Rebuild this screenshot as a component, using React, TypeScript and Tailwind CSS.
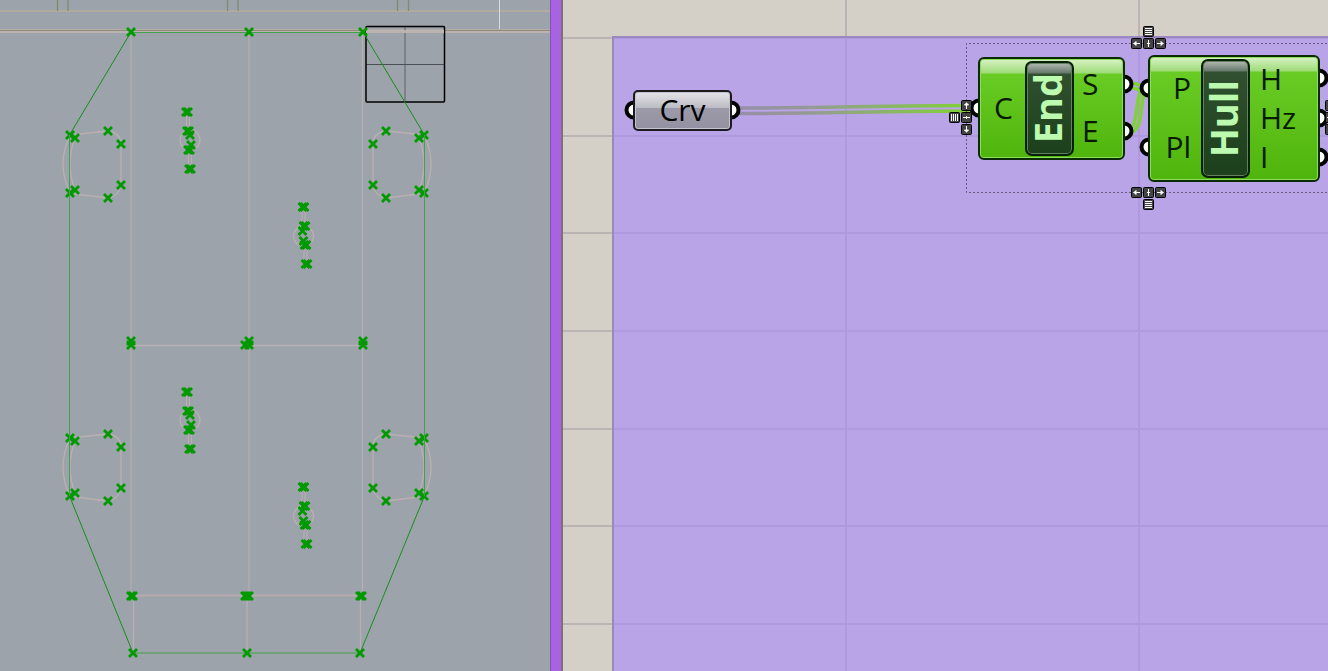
import React from "react";

type Point = [number, number];

const CROSS = "M-4 -4L4 4M-4 4L4 -4";

const framePoints: Point[] = [
  [131, 32], [249, 32], [363, 32],
  [131, 341], [131, 345], [245, 345], [249, 341], [249, 345], [363, 341], [363, 345],
  [131, 596], [133, 596], [245, 596], [247, 596], [249, 596], [360, 596], [362, 596],
  [133, 653], [247, 653], [360, 653],
];

const wheelPoints: Point[] = [
  [70, 135], [75, 138], [108, 131], [121, 144], [121, 185], [108, 198], [75, 190], [70, 193],
];

const lugPoints: Point[] = [
  [186, 112], [188, 112], [187, 131], [189, 131], [190, 135], [191, 145], [188, 150], [190, 150], [189, 169], [191, 169],
];

function Cross({ at }: { at: Point }) {
  return <path d={CROSS} transform={`translate(${at[0]} ${at[1]})`} stroke="#009a00" strokeWidth="2.800" />;
}

function Wheel({ transform }: { transform: string }) {
  return (
    <g transform={transform}>
      <path d="M70 135Q56 164 70 193M75 138Q65 164 75 190M75 134.500L108 131Q121 133 121 144V185Q119 196 108 198L75 194" stroke="#bdafb1" strokeWidth="1.300" />
      {wheelPoints.map((p, i) => <Cross key={i} at={p} />)}
    </g>
  );
}

function Lug({ transform }: { transform: string }) {
  return (
    <g transform={transform}>
      <circle cx="190" cy="140" r="10" stroke="#bdafb1" strokeWidth="1.300" />
      <path d="M186.500 112V131M189.500 112V131M188.500 150V169M191.500 150V169" stroke="#bdafb1" />
      {lugPoints.map((p, i) => <Cross key={i} at={p} />)}
    </g>
  );
}

function Viewport() {
  return (
    <svg className="block" width="550" height="671" fill="none" role="img" aria-label="Curve outlines">
      <path d="M0 11H550" stroke="#b1ab9f" strokeWidth="2" />
      <path d="M57.500 0V11M68 0V11M227.500 0V11M238 0V11M397.500 0V11M408.500 0V11" stroke="#7f8a6e" strokeWidth="1.300" />
      <path d="M499.500 0V30" stroke="#d8dbdd" />
      <path d="M0 29.500H550" stroke="#b5aca8" />
      <path d="M0 30.500H550" stroke="#8f8b76" />
      <path d="M0 32H550" stroke="#bab3b1" strokeWidth="2" />
      <path d="M405 27V102" stroke="#7c8288" strokeWidth="2" />
      <path d="M366 64.500H444" stroke="#4c5055" />
      <rect x="366" y="26.500" width="78.500" height="75.500" rx="1" stroke="#000" strokeWidth="1.500" />
      <path d="M366 31.500H444" stroke="#bab3b1" strokeWidth="3" />
      <path d="M131 32V596M249 32V596" stroke="#aba9ad" strokeWidth="2" />
      <path d="M362.500 32V596M131 345.500H363M133.500 596V653M247 596V653M360.500 596V653" stroke="#b9aeb1" strokeWidth="1.300" />
      <path d="M131 595.500H362" stroke="#b5abae" strokeWidth="2" />
      <Wheel transform="translate(0 0)" />
      <Wheel transform="translate(0 303)" />
      <Wheel transform="translate(494 0) scale(-1 1)" />
      <Wheel transform="translate(494 303) scale(-1 1)" />
      <Lug transform="translate(0 0)" />
      <Lug transform="translate(0 280)" />
      <Lug transform="translate(493.500 376) rotate(180)" />
      <Lug transform="translate(493.500 656) rotate(180)" />
      <path d="M131 32.500H363M69.500 135V496M424.500 135V496M133 653H360" stroke="#45a04c" />
      <path d="M131 32L69.500 135M363 32L424.500 135M69.500 496L133 653M424.500 496L360 653" stroke="#149018" />
      {framePoints.map((p, i) => <Cross key={i} at={p} />)}
    </svg>
  );
}

function Port({ side }: { side: "in" | "out" }) {
  return (
    <svg className="h-5 w-[10px]" viewBox="0 0 10 20" aria-hidden="true">
      <circle cx={side === "in" ? 10 : 0} cy="10" r="7.500" fill="#fff" stroke="#000" strokeWidth="4" />
    </svg>
  );
}

function Ports({ side, count }: { side: "in" | "out"; count: number }) {
  return (
    <div className={side === "in" ? "-mr-px flex flex-col pt-[3px] pb-[5px]" : "-ml-px flex flex-col pt-[3px] pb-[5px]"}>
      {Array.from({ length: count }, (_, i) => (
        <div key={i} className="flex flex-1 items-center"><Port side={side} /></div>
      ))}
    </div>
  );
}

interface ComponentProps {
  name: string;
  inputs: string[];
  outputs: string[];
  className: string;
  inputClass: string;
  outputClass: string;
}

function Component({ name, inputs, outputs, className, inputClass, outputClass }: ComponentProps) {
  return (
    <div className={`absolute flex ${className}`}>
      <Ports side="in" count={inputs.length} />
      <section className="relative z-10 flex flex-1 rounded-[6px] border-2 border-[#0a2a04] bg-[linear-gradient(#d9f3c6_0px,#9edb78_14px,#69cc25_15px,#4fb40c_100%)] py-0.5 shadow-[inset_0_0_0_1px_#8fdc5c]">
        <ul className={`flex flex-col pb-0.5 ${inputClass}`}>
          {inputs.map((t) => <li key={t} className="flex flex-1 items-center leading-8">{t}</li>)}
        </ul>
        <h2 className="flex w-[49px] items-center justify-center rounded-[7px] border-2 border-[#062006] bg-[linear-gradient(#b4bcb4_0px,#66786a_10px,#30502f_11px,#1c401b_100%)] pr-1.5 text-[38px] leading-[38px] font-bold text-[#bcfab0] shadow-[inset_0_0_0_1px_#64805f]">
          <span className="rotate-180 [writing-mode:vertical-rl]">{name}</span>
        </h2>
        <ul className={`flex flex-1 flex-col pb-0.5 ${outputClass}`}>
          {outputs.map((t) => <li key={t} className="flex flex-1 items-center leading-8">{t}</li>)}
        </ul>
      </section>
      <Ports side="out" count={outputs.length} />
    </div>
  );
}

const glyphs = {
  left: "M2.500 5.500H9M5 3.500L3 5.500L5 7.500Z",
  right: "M2 5.500H8.500M6 3.500L8 5.500L6 7.500Z",
  up: "M5.500 2.500V9M3.500 5L5.500 3L7.500 5Z",
  down: "M5.500 2V8.500M3.500 6L5.500 8L7.500 6Z",
  plusV: "M5.500 2V9M4 5.500H7",
  plusH: "M2 5.500H9M5.500 4V7",
  rows: "M2 2.500H9M2 4.500H9M2 6.500H9M2 8.500H9",
  columns: "M2.500 2V9M4.500 2V9M6.500 2V9M8.500 2V9",
};

function Handle({ glyph, label }: { glyph: keyof typeof glyphs; label: string }) {
  return (
    <button type="button" aria-label={label} className="block size-[11px]">
      <svg viewBox="0 0 11 11" className="block size-[11px]">
        <rect x="0.500" y="0.500" width="10" height="10" rx="1" fill="#444" stroke="#000" />
        <path d={glyphs[glyph]} stroke="#fff" fill="#fff" />
      </svg>
    </button>
  );
}

function HorizontalHandles() {
  return (
    <div className="flex gap-px">
      <Handle glyph="left" label="Align left" />
      <Handle glyph="plusV" label="Align centre" />
      <Handle glyph="right" label="Align right" />
    </div>
  );
}

function VerticalHandles() {
  return (
    <div className="flex flex-col gap-px">
      <Handle glyph="up" label="Align top" />
      <Handle glyph="plusH" label="Align middle" />
      <Handle glyph="down" label="Align bottom" />
    </div>
  );
}

function Wires() {
  return (
    <svg className="absolute inset-0 size-full" fill="none" aria-hidden="true">
      <defs>
        <linearGradient id="wire" gradientUnits="userSpaceOnUse" x1="175" y1="0" x2="410" y2="0">
          <stop offset="0" stopColor="#978ea8" />
          <stop offset="0.300" stopColor="#959a94" />
          <stop offset="1" stopColor="#7fd332" />
        </linearGradient>
      </defs>
      <path d="M172 108C260 108 320 105.500 410 105.500M172 113.500C260 113.500 320 111 410 111" stroke="url(#wire)" strokeWidth="3.500" />
      <path d="M568 83C574 83 576 86 582 86M568 88C574 88 576 91 582 91M566 129C577 126 570 91 583 86M566 134C584 128 574 96 585 90" stroke="#7fd332" strokeWidth="3.500" />
      <path d="M1000 43.500H403.500V192.500H1000" stroke="#66577f" strokeDasharray="2 2" />
    </svg>
  );
}

function Grid() {
  return (
    <svg className="absolute inset-0 size-full" aria-hidden="true">
      <path
        d="M283 0V2000M576 0V2000M0 38H3000M0 136H3000M0 233H3000M0 331H3000M0 429H3000M0 526H3000M0 624H3000"
        stroke="#201030" strokeOpacity="0.140" strokeWidth="2"
      />
    </svg>
  );
}

export default function App() {
  return (
    <main className="flex h-screen overflow-hidden bg-[#9ca3ab] font-['Open_Sans',sans-serif] text-[30px] text-[#061a02]">
      <div className="shrink-0"><Viewport /></div>
      <div className="w-[13px] shrink-0 border-r-2 border-l border-r-[#77727c] border-l-[#8750b8] bg-[#a863e0]" />
      <div className="relative flex-1 overflow-hidden bg-[#d4d0c8] pt-9 pl-[49px]">
        <Grid />
        <div className="relative h-full border-t-2 border-l-2 border-[#9a88be] bg-[rgba(169,135,253,0.6)]" />
        <Wires />
        <div className="absolute top-[90px] left-[61px] flex h-[41px] w-[117px] text-black">
          <Ports side="in" count={1} />
          <div className="z-10 flex flex-1 items-center justify-center rounded-[5px] border-2 border-[#1c1c20] bg-[linear-gradient(#e4e4e8,#bcbcc4_42%,#9c9aa8_43%,#9492a2)] pb-0.5 leading-8 shadow-[inset_0_0_0_1px_#c4c2cc]">Crv</div>
          <Ports side="out" count={1} />
        </div>
        <Component
          name="End" inputs={["C"]} outputs={["S", "E"]}
          className="top-[57px] left-[406px] h-[103px] w-[165px]"
          inputClass="w-[45px] pl-3.5" outputClass="pl-2"
        />
        <Component
          name="Hull" inputs={["P", "Pl"]} outputs={["H", "Hz", "I"]}
          className="top-[55px] left-[576px] h-[127px] w-[190px]"
          inputClass="w-[51px] items-end pr-2.5" outputClass="pl-2.5"
        />
        <div className="absolute top-[26px] left-[568px] z-20 flex flex-col items-center gap-px">
          <Handle glyph="rows" label="Distribute vertically, top" />
          <HorizontalHandles />
        </div>
        <div className="absolute top-[187px] left-[568px] z-20 flex flex-col items-center gap-px">
          <HorizontalHandles />
          <Handle glyph="rows" label="Distribute vertically, bottom" />
        </div>
        <div className="absolute top-[100px] left-[386px] z-20 flex items-center gap-px">
          <Handle glyph="columns" label="Distribute horizontally" />
          <VerticalHandles />
        </div>
        <div className="absolute top-[100px] left-[762px] z-20"><VerticalHandles /></div>
      </div>
    </main>
  );
}
